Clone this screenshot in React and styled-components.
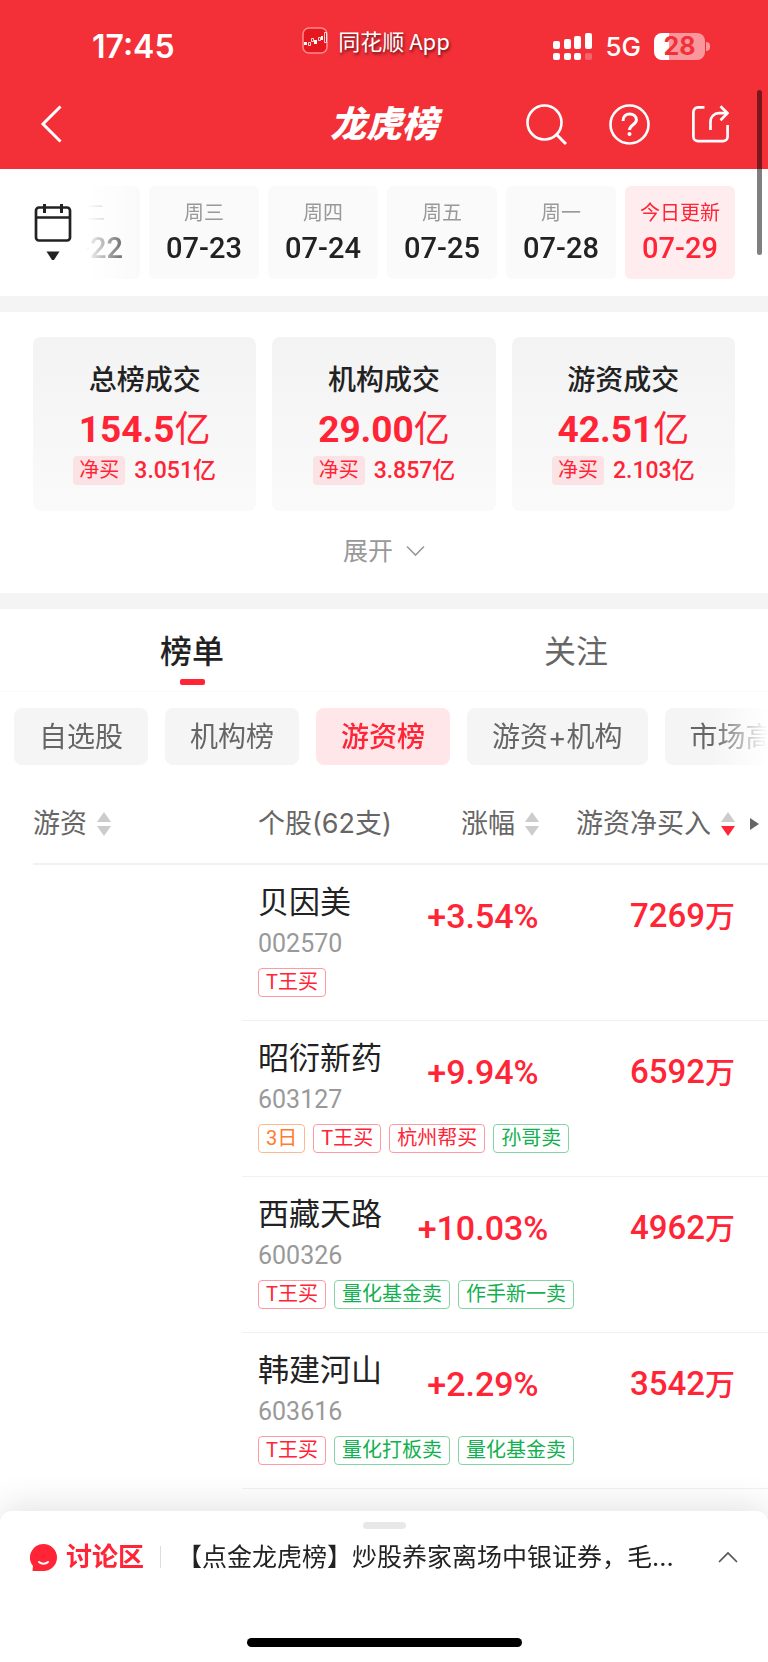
import React from "react";
import styled, { createGlobalStyle } from "styled-components";

const RED = "#ff2436";
const UI_FONT = `Inter, "Noto Sans CJK SC", sans-serif`;
const NUM_FONT = `Roboto, "Noto Sans CJK SC", sans-serif`;

const GlobalStyle = createGlobalStyle`
  * {
    box-sizing: border-box;
  }
  body {
    margin: 0;
    background: #fff;
    color: #222;
    font-family: ${UI_FONT};
  }
  h1, h2, p {
    margin: 0;
    font-weight: inherit;
  }
  button {
    margin: 0;
    padding: 0;
    border: 0;
    background: none;
    color: inherit;
    font: inherit;
    cursor: pointer;
  }
  svg {
    display: block;
    flex: none;
  }
`;

const Page = styled.div`
  padding-bottom: 151px;
  overflow-x: hidden;
`;

/* ---------- header ---------- */

const Header = styled.header`
  padding-bottom: 13px;
  background: #f32f38;
  color: #fff;
`;

const StatusBar = styled.div`
  display: grid;
  grid-template-columns: 1fr auto 1fr;
  align-items: center;
  height: 92px;
  padding: 0 58px 0 42px;
`;

const Clock = styled.time`
  padding: 2px 0 0 50px;
  font-size: 32px;
  font-weight: 600;
  line-height: 40px;
`;

const AppLabel = styled.div`
  display: flex;
  align-items: center;
  gap: 10px;
  padding-bottom: 12px;
  font-family: "Noto Sans CJK SC", sans-serif;
  font-size: 22px;
  line-height: 32px;
  text-shadow: 1px 2px 3px rgba(0, 0, 0, 0.6);
`;

const Signals = styled.div`
  display: flex;
  align-items: center;
  justify-content: flex-end;
`;

const Network = styled.span`
  margin: 0 13px;
  padding-top: 2px;
  font-size: 26px;
  font-weight: 500;
  line-height: 32px;
`;

const Battery = styled.span`
  width: 51px;
  height: 27px;
  border-radius: 8px;
  background: linear-gradient(90deg, #fff 15px, rgba(255, 255, 255, 0.5) 15px);
  color: #f32f38;
  font-size: 25px;
  font-weight: 700;
  line-height: 27px;
  text-align: center;
`;

const BatteryTip = styled.span`
  width: 4px;
  height: 9px;
  margin-left: 1px;
  border-radius: 0 4px 4px 0;
  background: rgba(255, 255, 255, 0.5);
`;

const NavBar = styled.nav`
  display: grid;
  grid-template-columns: 1fr auto 1fr;
  align-items: center;
  height: 64px;
  padding: 0 39px;
`;

const Title = styled.h1`
  font-size: 36px;
  font-style: italic;
  font-weight: 900;
  line-height: 48px;
`;

const NavActions = styled.div`
  display: flex;
  align-items: center;
  justify-content: ${(props) => (props.$start ? "flex-start" : "flex-end")};
  gap: 42px;
`;

const ScrollThumb = styled.div`
  position: fixed;
  top: 90px;
  right: 6px;
  width: 5px;
  height: 165px;
  border-radius: 3px;
  background: rgba(0, 0, 0, 0.5);
`;

/* ---------- dates ---------- */

const Band = styled.div`
  height: 16px;
  background: #f4f4f4;
`;

const DateBar = styled.section`
  display: flex;
  align-items: center;
  padding: 17px 33px 17px 34px;
`;

const CalendarButton = styled.button`
  display: flex;
  flex-direction: column;
  align-items: center;
  gap: 9px;
  width: 38px;
`;

const DateList = styled.div`
  display: flex;
  flex: 1;
  justify-content: flex-end;
  gap: 9px;
  min-width: 0;
  margin-left: 14px;
  overflow: hidden;
  mask-image: linear-gradient(90deg, transparent, #000 56px);
`;

const DateCell = styled.button`
  flex: none;
  width: 110px;
  height: 93px;
  padding-bottom: 2px;
  border-radius: 6px;
  background: ${(props) => (props.$active ? "#ffecee" : "#fafafa")};
  color: ${(props) => (props.$active ? RED : "#222")};
`;

const Weekday = styled.span`
  display: block;
  color: ${(props) => (props.$active ? RED : "#999")};
  font-size: 20px;
  line-height: 32px;
`;

const Day = styled.span`
  display: block;
  font-family: ${NUM_FONT};
  font-size: 29px;
  font-weight: 500;
  line-height: 38px;
`;

/* ---------- summary ---------- */

const Summary = styled.section`
  padding: 25px 33px 22px;
`;

const Cards = styled.div`
  display: grid;
  grid-template-columns: repeat(3, 1fr);
  gap: 16px;
`;

const Card = styled.article`
  display: flex;
  flex-direction: column;
  align-items: center;
  height: 174px;
  padding-top: 23px;
  border-radius: 8px;
  background: linear-gradient(#f3f3f3, #fafafa);
  white-space: nowrap;
`;

const CardTitle = styled.h2`
  font-size: 28px;
  font-weight: 500;
  line-height: 40px;
`;

const Total = styled.p`
  margin-top: 4px;
  color: ${RED};
  font-family: ${NUM_FONT};
  font-size: 37px;
  font-weight: 700;
  line-height: 52px;
`;

const Unit = styled.span`
  font-size: 36px;
  font-weight: 400;
`;

const Net = styled.p`
  display: flex;
  align-items: center;
  gap: 9px;
  color: ${RED};
  font-family: ${NUM_FONT};
  font-size: 23px;
  font-weight: 500;
  line-height: 29px;
`;

const NetTag = styled.span`
  padding: 0 6px;
  border-radius: 4px;
  background: #fbe3e5;
  font-size: 20px;
  font-weight: 400;
`;

const ExpandButton = styled.button`
  display: flex;
  align-items: center;
  gap: 13px;
  margin: 20px auto 0;
  color: #999;
  font-size: 25px;
  line-height: 40px;
`;

/* ---------- tabs and filters ---------- */

const Tabs = styled.div`
  display: flex;
  height: 83px;
  border-bottom: 1px solid #fafafa;
`;

const Tab = styled.button`
  display: flex;
  flex: 1;
  flex-direction: column;
  align-items: center;
  padding-top: 19px;
  color: ${(props) => (props.$active ? "#222" : "#666")};
  font-size: 32px;
  font-weight: ${(props) => (props.$active ? 500 : 400)};
  line-height: 48px;

  &::after {
    width: 25px;
    height: 6px;
    margin-top: 3px;
    border-radius: 2px;
    background: ${(props) => (props.$active ? RED : "transparent")};
    content: "";
  }
`;

const Filters = styled.div`
  display: flex;
  gap: 17px;
  padding: 16px 0 0 14px;
  overflow: hidden;
  mask-image: linear-gradient(270deg, transparent, #000 56px);
`;

const Chip = styled.button`
  flex: none;
  height: 57px;
  padding: 0 25px;
  border-radius: 8px;
  background: ${(props) => (props.$active ? "#ffe7e9" : "#f5f5f5")};
  color: ${(props) => (props.$active ? RED : "#666")};
  font-size: 28px;
  font-weight: ${(props) => (props.$active ? 500 : 400)};
  line-height: 40px;
`;

/* ---------- table ---------- */

const TableWrap = styled.section`
  padding: 17px 0 0 33px;
`;

const Table = styled.table`
  width: 100%;
  border-collapse: separate;
  border-spacing: 0;
  table-layout: fixed;
`;

const Th = styled.th`
  width: ${(props) => props.$width};
  height: 83px;
  padding: 2px ${(props) => props.$right || "0"} 0 ${(props) => props.$left || "0"};
  border-bottom: 2px solid #f1f1f1;
  color: #666;
  font-size: 27px;
  font-weight: 400;
  line-height: 40px;
  text-align: left;
  white-space: nowrap;
`;

const HeadCell = styled.div`
  display: flex;
  align-items: center;
  justify-content: flex-end;
  gap: 15px;
`;

const SortButton = styled.button`
  display: flex;
  align-items: center;
  gap: 10px;
`;

const Td = styled.td`
  height: 156px;
  padding: 0;
  border-bottom: 1px solid #f1f1f1;
  vertical-align: top;
  white-space: nowrap;
`;

const EmptyCell = styled(Td)`
  border-bottom: 0;
`;

const StockCell = styled(Td)`
  padding: 17px 0 0 16px;
`;

const FigureCell = styled(Td)`
  padding: 31px ${(props) => (props.$end ? "33px" : "0")} 0 0;
  color: ${RED};
  font-family: ${NUM_FONT};
  font-size: ${(props) => (props.$end ? "33px" : "34px")};
  font-weight: 500;
  line-height: 40px;
  text-align: ${(props) => (props.$end ? "right" : "center")};
`;

const FigureUnit = styled.span`
  font-size: 30px;
`;

const StockName = styled.div`
  font-size: 31px;
  line-height: 40px;
`;

const StockCode = styled.div`
  margin: 6px 0 8px;
  color: #999;
  font-family: ${NUM_FONT};
  font-size: 25px;
  line-height: 32px;
`;

const Tags = styled.div`
  display: flex;
  gap: 8px;
`;

const tones = {
  buy: { text: RED, line: "#ff9aa3" },
  sell: { text: "#12b04e", line: "#84d5a3" },
  days: { text: "#ff7a2e", line: "#ffb98f" },
};

const Tag = styled.span`
  flex: none;
  height: 29px;
  padding: 0 7px;
  border: 1px solid ${(props) => tones[props.$tone].line};
  border-radius: 4px;
  color: ${(props) => tones[props.$tone].text};
  font-family: ${NUM_FONT};
  font-size: 20px;
  line-height: 27px;
`;

/* ---------- bottom sheet ---------- */

const Sheet = styled.aside`
  position: fixed;
  right: 0;
  bottom: 0;
  left: 0;
  display: flex;
  flex-direction: column;
  align-items: center;
  height: 151px;
  padding: 11px 30px 15px;
  border-radius: 12px 12px 0 0;
  background: #fff;
  box-shadow: 0 -4px 36px rgba(0, 0, 0, 0.12);
`;

const Handle = styled.div`
  width: 43px;
  height: 7px;
  border-radius: 4px;
  background: #e8e8e8;
`;

const SheetRow = styled.div`
  display: flex;
  align-items: center;
  width: 100%;
  margin-top: 8px;
  line-height: 40px;
`;

const SheetTitle = styled.h2`
  margin-left: 9px;
  color: ${RED};
  font-size: 26px;
  font-weight: 700;
`;

const Divider = styled.span`
  width: 1px;
  height: 22px;
  margin: 0 16px;
  background: #ddd;
`;

const Headline = styled.a`
  flex: 1;
  min-width: 0;
  overflow: hidden;
  color: #222;
  font-size: 25px;
  text-decoration: none;
  white-space: nowrap;
`;

const HomeBar = styled.div`
  width: 275px;
  height: 9px;
  margin-top: auto;
  border-radius: 5px;
  background: #000;
`;

/* ---------- icons ---------- */

const AppLogo = () => (
  <svg width="26" height="27" viewBox="0 0 26 27" fill="none">
    <rect x="1" y="1" width="24" height="25" rx="6" fill="#e5171f" stroke="#fa8c90" strokeWidth="1.5" />
    <path d="M2 15h3v3H2zM12 13h3v4h-3zM19 9h2v4h-2z" fill="#fff" />
    <path d="M6.500 15.500h2v3h-2zM9.500 11.500h2v3h-2zM16.500 10.500h2v3h-2zM22.500 5.500h2v10h-2z" stroke="#fff" strokeWidth="0.8" />
  </svg>
);

const SignalIcon = () => (
  <svg width="39" height="27" viewBox="0 0 39 27" fill="#fff">
    <rect x="0" y="8" width="7" height="8" rx="2" />
    <rect x="11" y="6" width="7" height="10" rx="2" />
    <rect x="21" y="3" width="7" height="13" rx="2" />
    <rect x="32" y="0" width="7" height="16" rx="2" />
    <rect x="0" y="20" width="7" height="7" rx="2" />
    <rect x="11" y="20" width="7" height="7" rx="2" />
    <rect x="21" y="20" width="7" height="7" rx="2" />
    <rect x="32" y="20" width="7" height="7" rx="2" opacity="0.25" />
  </svg>
);

const BackIcon = () => (
  <svg width="24" height="38" viewBox="0 0 24 38" fill="none" stroke="#fff" strokeWidth="3">
    <path d="M21.500 1.500L4 19l17.500 17.500" />
  </svg>
);

const SearchIcon = () => (
  <svg width="41" height="41" viewBox="0 0 41 41" fill="none" stroke="#fff" strokeWidth="2.600">
    <circle cx="18.500" cy="18.500" r="17" />
    <path d="M31 31l9 9" strokeWidth="3" />
  </svg>
);

const HelpIcon = () => (
  <svg width="41" height="41" viewBox="0 0 41 41" fill="none" stroke="#fff" strokeWidth="2.600">
    <circle cx="20.500" cy="20.500" r="19" />
    <path d="M14 17c0-4.500 2.800-7 6.700-7 3.900 0 6.700 2.400 6.700 6 0 4.700-6.900 4.700-6.900 10" strokeWidth="3" />
    <circle cx="20.500" cy="30" r="2" fill="#fff" stroke="none" />
  </svg>
);

const ShareIcon = () => (
  <svg width="37" height="38" viewBox="0 0 37 38" fill="none" stroke="#fff" strokeWidth="2.700">
    <path d="M12.500 2.400H6a4.600 4.600 0 0 0-4.600 4.600v24.500A4.600 4.600 0 0 0 6 36.100h25a4.600 4.600 0 0 0 4.600-4.600V20" />
    <path d="M18.500 25v-8.500a8.300 8.300 0 0 1 8.300-8.300H35" />
    <path d="M28.500 1.200l7 7-7 7" />
  </svg>
);

const CalendarIcon = () => (
  <svg width="38" height="38" viewBox="0 0 38 38" fill="none" stroke="#222" strokeWidth="2.700">
    <rect x="2" y="3.500" width="34" height="33" rx="3" />
    <path d="M2 13.500h34" />
    <path d="M10.500 0v9M27.500 0v9" strokeWidth="3" />
  </svg>
);

const CaretDown = () => (
  <svg width="14" height="10" viewBox="0 0 14 10">
    <path d="M0.500 0.500h13L8 9H6z" fill="#222" />
  </svg>
);

const ChevronDown = () => (
  <svg width="19" height="12" viewBox="0 0 19 12" fill="none" stroke="#999" strokeWidth="1.600">
    <path d="M1 1.500l8.500 8.500L18 1.500" />
  </svg>
);

const ChevronUp = () => (
  <svg width="20" height="12" viewBox="0 0 20 12" fill="none" stroke="#555" strokeWidth="1.700">
    <path d="M1 11l9-9 9 9" />
  </svg>
);

const SortIcon = ({ desc }) => (
  <svg width="14" height="24" viewBox="0 0 14 24">
    <path d="M7 0l7 10H0z" fill="#ccc" />
    <path d="M0 14h14L7 24z" fill={desc ? RED : "#ccc"} />
  </svg>
);

const MoreIcon = () => (
  <svg width="9" height="12" viewBox="0 0 9 12">
    <path d="M0 0l9 6-9 6z" fill="#666" />
  </svg>
);

const ChatIcon = () => (
  <svg width="27" height="27" viewBox="0 0 27 27" fill="none">
    <path d="M13.500 0a13.500 13.500 0 1 1 0 27H3.500c-1 0-1.300-.6-.9-1.300l.4-3.700A13.500 13.500 0 0 1 13.500 0z" fill={RED} />
    <path d="M9 18c2.500 2.300 6.500 2.300 9 0" stroke="#fff" strokeWidth="2" strokeLinecap="round" />
  </svg>
);

/* ---------- data ---------- */

const dates = [
  { weekday: "周二", day: "07-22" },
  { weekday: "周三", day: "07-23" },
  { weekday: "周四", day: "07-24" },
  { weekday: "周五", day: "07-25" },
  { weekday: "周一", day: "07-28" },
  { weekday: "今日更新", day: "07-29", active: true },
];

const totals = [
  { title: "总榜成交", total: "154.5", net: "3.051亿" },
  { title: "机构成交", total: "29.00", net: "3.857亿" },
  { title: "游资成交", total: "42.51", net: "2.103亿" },
];

const filters = ["自选股", "机构榜", "游资榜", "游资+机构", "市场高度"];

const stocks = [
  {
    name: "贝因美",
    code: "002570",
    change: "+3.54%",
    amount: "7269",
    tags: [["buy", "T王买"]],
  },
  {
    name: "昭衍新药",
    code: "603127",
    change: "+9.94%",
    amount: "6592",
    tags: [["days", "3日"], ["buy", "T王买"], ["buy", "杭州帮买"], ["sell", "孙哥卖"]],
  },
  {
    name: "西藏天路",
    code: "600326",
    change: "+10.03%",
    amount: "4962",
    tags: [["buy", "T王买"], ["sell", "量化基金卖"], ["sell", "作手新一卖"]],
  },
  {
    name: "韩建河山",
    code: "603616",
    change: "+2.29%",
    amount: "3542",
    tags: [["buy", "T王买"], ["sell", "量化打板卖"], ["sell", "量化基金卖"]],
  },
];

const StockRow = ({ name, code, change, amount, tags }) => (
  <tr>
    <EmptyCell />
    <StockCell>
      <StockName>{name}</StockName>
      <StockCode>{code}</StockCode>
      <Tags>
        {tags.map(([tone, text]) => (
          <Tag key={text} $tone={tone}>
            {text}
          </Tag>
        ))}
      </Tags>
    </StockCell>
    <FigureCell>{change}</FigureCell>
    <FigureCell $end>
      {amount}
      <FigureUnit>万</FigureUnit>
    </FigureCell>
  </tr>
);

export default function App() {
  return (
    <Page lang="zh-CN">
      <GlobalStyle />
      <Header>
        <StatusBar>
          <Clock>17:45</Clock>
          <AppLabel>
            <AppLogo />
            <span>同花顺 App</span>
          </AppLabel>
          <Signals>
            <SignalIcon />
            <Network>5G</Network>
            <Battery>28</Battery>
            <BatteryTip />
          </Signals>
        </StatusBar>
        <NavBar>
          <NavActions $start>
            <button type="button" aria-label="返回">
              <BackIcon />
            </button>
          </NavActions>
          <Title>龙虎榜</Title>
          <NavActions>
            <button type="button" aria-label="搜索">
              <SearchIcon />
            </button>
            <button type="button" aria-label="帮助">
              <HelpIcon />
            </button>
            <button type="button" aria-label="分享">
              <ShareIcon />
            </button>
          </NavActions>
        </NavBar>
      </Header>

      <DateBar>
        <CalendarButton type="button" aria-label="选择日期">
          <CalendarIcon />
          <CaretDown />
        </CalendarButton>
        <DateList>
          {dates.map(({ weekday, day, active }) => (
            <DateCell key={day} type="button" $active={active}>
              <Weekday $active={active}>{weekday}</Weekday>
              <Day>{day}</Day>
            </DateCell>
          ))}
        </DateList>
      </DateBar>
      <Band />

      <Summary>
        <Cards>
          {totals.map(({ title, total, net }) => (
            <Card key={title}>
              <CardTitle>{title}</CardTitle>
              <Total>
                {total}
                <Unit>亿</Unit>
              </Total>
              <Net>
                <NetTag>净买</NetTag>
                {net}
              </Net>
            </Card>
          ))}
        </Cards>
        <ExpandButton type="button">
          展开
          <ChevronDown />
        </ExpandButton>
      </Summary>
      <Band />

      <Tabs>
        <Tab type="button" $active>
          榜单
        </Tab>
        <Tab type="button">关注</Tab>
      </Tabs>
      <Filters>
        {filters.map((label) => (
          <Chip key={label} type="button" $active={label === "游资榜"}>
            {label}
          </Chip>
        ))}
      </Filters>

      <TableWrap>
        <Table>
          <thead>
            <tr>
              <Th $width="209px">
                <SortButton type="button">
                  游资
                  <SortIcon />
                </SortButton>
              </Th>
              <Th $width="160px" $left="16px">
                个股(62支)
              </Th>
              <Th $width="162px" $right="25px">
                <HeadCell>
                  <SortButton type="button">
                    涨幅
                    <SortIcon />
                  </SortButton>
                </HeadCell>
              </Th>
              <Th $right="9px">
                <HeadCell>
                  <SortButton type="button">
                    游资净买入
                    <SortIcon desc />
                  </SortButton>
                  <MoreIcon />
                </HeadCell>
              </Th>
            </tr>
          </thead>
          <tbody>
            {stocks.map((stock) => (
              <StockRow key={stock.code} {...stock} />
            ))}
          </tbody>
        </Table>
      </TableWrap>

      <Sheet>
        <Handle />
        <SheetRow>
          <ChatIcon />
          <SheetTitle>讨论区</SheetTitle>
          <Divider />
          <Headline href="#discussion">【点金龙虎榜】炒股养家离场中银证券，毛...</Headline>
          <button type="button" aria-label="展开讨论区">
            <ChevronUp />
          </button>
        </SheetRow>
        <HomeBar />
      </Sheet>
      <ScrollThumb />
    </Page>
  );
}
